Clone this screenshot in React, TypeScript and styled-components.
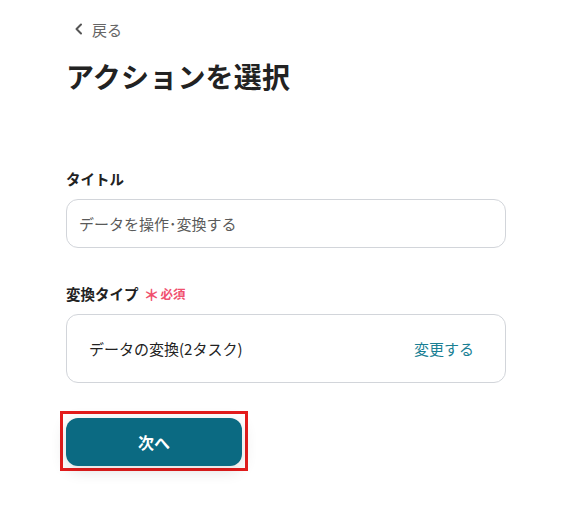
import React from 'react';
import styled, { createGlobalStyle } from 'styled-components';

const GlobalStyle = createGlobalStyle`
  body {
    margin: 0;
    background: #ffffff;
    font-family: 'Noto Sans CJK JP', 'Noto Sans', sans-serif;
    color: #222;
  }
`;

const Page = styled.div`
  width: 585px;
  height: 522px;
  box-sizing: border-box;
  padding: 18px 0 0 66px;
`;

const BackLink = styled.a`
  display: flex;
  align-items: center;
  gap: 8px;
  margin-left: 8px;
  font-size: 15px;
  color: #666;
  text-decoration: none;
  cursor: pointer;
  height: 22px;
`;

const Title = styled.h1`
  margin: 16px 0 0 0;
  font-size: 28px;
  font-weight: 700;
  line-height: 40px;
  color: #222;
  letter-spacing: 0.2px;
`;

const Field = styled.div<{ top: number }>`
  margin-top: ${props => props.top}px;
  width: 440px;
`;

const Label = styled.div`
  display: flex;
  align-items: center;
  font-size: 14.5px;
  font-weight: 700;
  color: #222;
  line-height: 20px;
  margin-bottom: 10px;
`;

const Required = styled.span`
  color: #f0506e;
  font-size: 12.5px;
  font-weight: 700;
  margin-left: 5px;
  display: flex;
  align-items: center;
  gap: 1px;
`;

const Star = styled.span`
  font-size: 16px;
`;

const Input = styled.div`
  box-sizing: border-box;
  height: 49px;
  border: 1px solid #d2d5da;
  border-radius: 12px;
  padding: 0 12px;
  display: flex;
  align-items: center;
  font-size: 15px;
  color: #5a5a5a;
`;

const SelectBox = styled.div`
  box-sizing: border-box;
  height: 69px;
  border: 1px solid #d2d5da;
  border-radius: 12px;
  padding: 0 31px 0 22px;
  display: flex;
  align-items: center;
  justify-content: space-between;
  font-size: 15px;
  color: #222;
`;

const ChangeLink = styled.a`
  color: #1a7f94;
  font-size: 15px;
  cursor: pointer;
`;

const Highlight = styled.div`
  display: inline-block;
  margin: 28px 0 0 -6px;
  border: 3px solid #e41c1c;
  padding: 4px 3px 2px 3px;
`;

const NextButton = styled.button`
  width: 176px;
  height: 48px;
  border: none;
  border-radius: 12px;
  background: #0b6a82;
  color: #fff;
  font-family: inherit;
  font-size: 16px;
  font-weight: 700;
  box-shadow: 0 4px 16px rgba(0, 0, 0, 0.14);
  cursor: pointer;
`;

const Chevron = () => (
  <svg width="10" height="12" viewBox="0 0 10 12">
    <path d="M7 1.5 L2.5 6 L7 10.5" fill="none" stroke="#555" strokeWidth="2" strokeLinecap="round" strokeLinejoin="round" />
  </svg>
);

export default function App() {
  return (
    <Page>
      <GlobalStyle />
      <BackLink>
        <Chevron />
        戻る
      </BackLink>
      <Title>アクションを選択</Title>

      <Field top={73}>
        <Label>タイトル</Label>
        <Input>データを操作･変換する</Input>
      </Field>

      <Field top={36}>
        <Label>
          変換タイプ
          <Required>
            <Star>＊</Star>必須
          </Required>
        </Label>
        <SelectBox>
          <span>データの変換(2タスク)</span>
          <ChangeLink>変更する</ChangeLink>
        </SelectBox>
      </Field>

      <Highlight>
        <NextButton>次へ</NextButton>
      </Highlight>
    </Page>
  );
}
